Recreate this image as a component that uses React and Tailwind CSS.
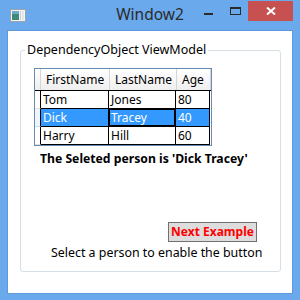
export default function App() {
  const font = { fontFamily: '"Noto Sans", "Open Sans", sans-serif' };
  const rows = [
    ["Tom", "Jones", "80", false],
    ["Dick", "Tracey", "40", true],
    ["Harry", "Hill", "60", false],
  ];
  return (
    <div className="w-[300px] h-[300px] bg-[#6aa9ec] flex flex-col overflow-hidden" style={font}>
      {/* Title bar */}
      <div className="relative h-[30px] flex items-start">
        <svg className="absolute left-[10px] top-[9px]" width="16" height="13" viewBox="0 0 16 13">
          <rect x="0.5" y="0.5" width="15" height="12" fill="#f4f4f4" stroke="#9aa3ad" />
          <rect x="2" y="2" width="7" height="9" fill="#3f8a78" />
          <rect x="2" y="2" width="7" height="3" fill="#6fa9c8" />
          <rect x="10" y="2" width="1" height="9" fill="#c9cfd4" />
          <rect x="12" y="2" width="2" height="9" fill="#e2e6ea" />
        </svg>
        <div className="absolute left-0 right-0 top-[4px] text-center text-[15.5px] leading-[20px] text-[#2b2b2b]">
          Window2
        </div>
        <div className="absolute left-[204px] top-[13px] w-[9px] h-[2px] bg-[#2b2b2b]" />
        <div className="absolute left-[230px] top-[7px] w-[11px] h-[8px] border border-[#2b2b2b] border-t-2" />
        <div className="absolute left-[248px] top-[1px] w-[45px] h-[20px] bg-[#c75050] flex items-center justify-center">
          <svg width="10" height="8" viewBox="0 0 10 8">
            <path d="M1 0.5 L9 7.5 M9 0.5 L1 7.5" stroke="#ffffff" strokeWidth="2" />
          </svg>
        </div>
      </div>
      {/* Client area */}
      <div className="ml-[7px] w-[286px] h-[264px] border border-[#5f98dc] bg-white">
        <fieldset className="ml-[12px] mt-[11px] w-[261px] h-[230px] border border-[#d5dfe5] rounded-[3px] flex flex-col items-start">
          <legend className="ml-[4px] px-[2px] text-[12.5px] leading-[16px] text-black">DependencyObject ViewModel</legend>
          {/* DataGrid */}
          <div className="ml-[13px] mt-[10px] w-[178px] border border-[#688caf] text-[12px] leading-[17px] text-black">
            <div className="flex h-[21px] bg-gradient-to-b from-white to-[#eeeeee] border-b border-black box-content">
              <div className="w-[6px] border-r border-[#d5d5d5]" />
              <div className="w-[69px] pl-[5px] leading-[21px] border-r border-[#d5d5d5]">FirstName</div>
              <div className="w-[67px] pl-[5px] leading-[21px] border-r border-[#d5d5d5]">LastName</div>
              <div className="w-[34px] pl-[5px] leading-[21px] border-r border-[#d5d5d5]">Age</div>
            </div>
            {rows.map(([f, l, a, sel]) => (
              <div key={f} className="flex h-[18px]">
                <div className={`w-[6px] border-r border-r-black border-b ${sel ? "border-b-[#c5dcf5] bg-[#eef5fd]" : "border-b-[#e2e2e2] bg-white"}`} />
                <div className={`w-[68px] pl-[2px] border-r border-b border-black ${sel ? "bg-[#3399ff] text-white" : ""}`}>{f}</div>
                <div className={`w-[67px] border-r border-b border-black ${sel ? "bg-[#3399ff] text-white pl-0" : "pl-[2px]"}`}>
                  {sel ? <div className="h-[17px] pl-[1px] border border-black leading-[15px]">{l}</div> : l}
                </div>
                <div className={`w-[34px] pl-[2px] border-r border-b border-black ${sel ? "bg-[#3399ff] text-white" : ""}`}>{a}</div>
              </div>
            ))}
          </div>
          <div className="ml-[19px] mt-[5px] text-[12.2px] leading-[16px] font-bold text-black whitespace-nowrap">
            The Seleted person is 'Dick Tracey'
          </div>
          <button className="ml-[147px] mt-[55px] w-[89px] h-[20px] border border-[#707070] bg-[#dddddd] text-[12px] leading-[18px] font-bold text-[#ff0000] whitespace-nowrap flex items-center justify-center">
            Next Example
          </button>
          <div className="ml-[30px] mt-[3px] text-[12.4px] leading-[16px] text-black whitespace-nowrap">
            Select a person to enable the button
          </div>
        </fieldset>
      </div>
    </div>
  );
}
